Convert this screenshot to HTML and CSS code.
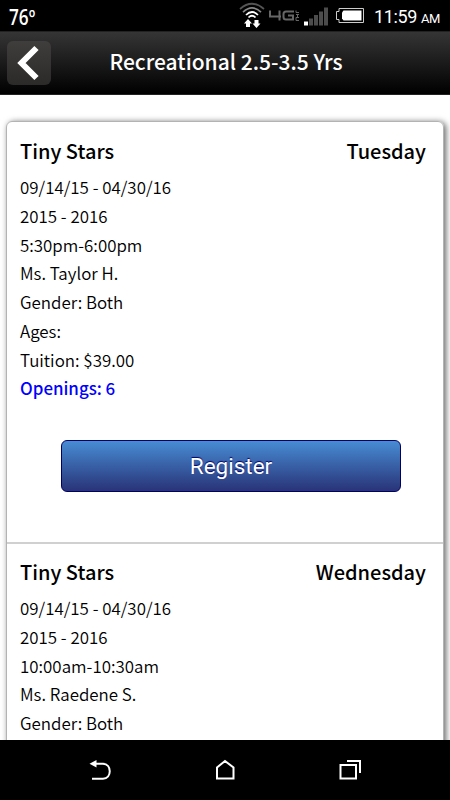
FILE: index.html
```html
<!DOCTYPE html>
<html lang="en">
<head>
  <meta charset="UTF-8">
  <title>Recreational 2.5-3.5 Yrs</title>
  <link rel="stylesheet" href="styles.css">
</head>
<body>
  <div class="status-bar">
    <span class="temp">76º</span>
    <svg class="status-icons" width="127" height="31" viewBox="0 0 127 31">
      <!-- wifi -->
      <g fill="none" stroke-width="1.7">
        <path d="M1 9 Q13 -1.5 25 9" stroke="#555"/>
        <path d="M4 12.2 Q13 3.6 22 12.2" stroke="#888"/>
        <path d="M7 15 Q13 9 19 15" stroke="#fff"/>
        <path d="M9.5 17.5 Q13 14 16.5 17.5" stroke="#fff"/>
      </g>
      <path d="M5 23.500 L9 19 L13 23.500 H11 V27 H7 V23.500 Z M13.500 23.500 H15.500 V20 H19.500 V23.500 H21.500 L17.500 28 Z" fill="#fff"/>
      <!-- 4G LTE -->
      <path d="M31 10.500 V16.500 H42 M40.500 10.500 V20.500 M55 11.500 H47 Q44.500 11.500 44.500 14 V17 Q44.500 19.500 47 19.500 H54 V15.500 H49" fill="none" stroke="#666" stroke-width="2"/>
      <path d="M57 10.500 V12.500 H60 M57 14.500 H60 M58.500 14.500 V17 M60 17.500 H57 V20.500 H60" fill="none" stroke="#666"/>
      <!-- signal -->
      <path d="M65 21.500 h4 v4 h-4 Z" fill="#fff"/>
      <path d="M70 18.500 h4 v7 h-4 Z M75 15 h4 v10.500 h-4 Z M80 11.500 h4 v14 h-4 Z M85 7.500 h4 v18 h-4 Z" fill="#4c4c4c"/>
      <!-- battery -->
      <path d="M100 8.500 H124.500 V22.500 H100 V19.500 H97.500 V11.500 H100 Z" fill="none" stroke="#ccc"/>
      <path d="M104.500 10.500 h18 v10 h-18 l-1.500 -2 v-6 Z" fill="#fff"/>
    </svg>
    <span class="clock">11:59 <small>AM</small></span>
  </div>

  <div class="header">
    <a class="back">
      <svg width="44" height="44" viewBox="0 0 44 44">
        <path d="M29.500 7 L14.500 22 L29.500 37" fill="none" stroke="#fff" stroke-width="6"/>
      </svg>
    </a>
    <h1>Recreational 2.5-3.5 Yrs</h1>
  </div>

  <div class="content">
    <ul class="class-list">
      <li>
        <div class="class-title"><span>Tiny Stars</span><span>Tuesday</span></div>
        <p>09/14/15 - 04/30/16</p>
        <p>2015 - 2016</p>
        <p>5:30pm-6:00pm</p>
        <p>Ms. Taylor H.</p>
        <p>Gender: Both</p>
        <p>Ages:</p>
        <p>Tuition: $39.00</p>
        <p class="openings">Openings: 6</p>
        <a class="register">Register</a>
      </li>
      <li>
        <div class="class-title"><span>Tiny Stars</span><span>Wednesday</span></div>
        <p>09/14/15 - 04/30/16</p>
        <p>2015 - 2016</p>
        <p>10:00am-10:30am</p>
        <p>Ms. Raedene S.</p>
        <p>Gender: Both</p>
      </li>
    </ul>
  </div>

  <div class="nav-bar">
    <svg width="24" height="24" viewBox="0 0 24 24">
      <path d="M7 5.800 H15 C24 6 24 20.500 15 20.700 H4" fill="none" stroke="#fff" stroke-width="2"/>
      <path d="M1.500 5.800 L8.500 2 V9.500 Z" fill="#fff"/>
    </svg>
    <svg width="24" height="24" viewBox="0 0 24 24">
      <path d="M4 20.500 V9.500 L12 3 L20.500 9.500 V20.500 Z" fill="none" stroke="#fff" stroke-width="2"/>
    </svg>
    <svg width="24" height="24" viewBox="0 0 24 24">
      <path d="M2.500 7 H18 V20.500 H2.500 Z M9 3 H22 V15" fill="none" stroke="#fff" stroke-width="2"/>
    </svg>
  </div>
</body>
</html>
```

FILE: styles.css
```css
* {
  box-sizing: border-box;
}
body {
  margin: 0;
  height: 800px;
  display: flex;
  flex-direction: column;
  overflow: hidden;
  background: #fff;
  color: #000;
  font-family: "Noto Sans CJK JP", "Noto Sans", sans-serif;
}
.status-bar {
  display: flex;
  flex: none;
  align-items: center;
  height: 31px;
  padding: 0 10px 0 9px;
  background: #000;
  color: #fff;
  font-family: Roboto, sans-serif;
}
.temp {
  width: 230px;
  padding-top: 2px;
  font-family: "Open Sans", sans-serif;
  font-size: 21.5px;
  font-weight: 600;
  line-height: 28px;
  transform: scaleX(0.8);
  transform-origin: left;
}
.status-icons {
  flex: none;
}
.clock {
  margin-left: auto;
  padding-top: 2px;
  font-size: 18px;
  letter-spacing: -0.4px;
  white-space: nowrap;
}
.clock small {
  font-size: 13px;
}
.header {
  display: flex;
  flex: none;
  align-items: center;
  height: 64px;
  padding: 0 7px;
  background: linear-gradient(#353535, #000);
  border-top: 1px solid #222;
  border-bottom: 1px solid #222;
}
.back {
  width: 44px;
  height: 44px;
  border-radius: 6px;
  background: linear-gradient(#403e3d, #2c2a29);
}
.header h1 {
  flex: 1;
  margin: 0 42px 4px 0;
  color: #fff;
  font-size: 21px;
  font-weight: 500;
  text-align: center;
  white-space: nowrap;
}
.content {
  flex: 1;
  min-height: 0;
  overflow: hidden;
  padding: 26px 6px 0;
}
.class-list {
  list-style: none;
  margin: 0;
  padding: 0;
  border: 1px solid #b3b3b3;
  border-radius: 6px;
  box-shadow: 2px 1px 6px rgba(0, 0, 0, 0.6);
}
.class-list li {
  height: 420px;
  padding: 11px 17px 0 13px;
}
.class-list li + li {
  padding-top: 10px;
  border-top: 2px solid #d0d0d0;
}
.class-title {
  display: flex;
  justify-content: space-between;
  height: 40px;
  font-size: 20px;
  font-weight: 500;
  line-height: 36px;
}
.class-list p {
  margin: 0;
  font-size: 16.9px;
  font-weight: 350;
  line-height: 28.75px;
}
.class-list .openings {
  color: #0000ff;
  font-weight: 500;
}
.register {
  display: block;
  width: 340px;
  height: 52px;
  margin: 37px 0 0 41px;
  border: 1px solid #000066;
  border-radius: 6px;
  background: linear-gradient(#478cd4, #293377);
  color: #fff;
  font-family: Roboto, sans-serif;
  font-size: 22.5px;
  line-height: 51px;
  text-align: center;
  text-shadow: 0 -1px 1px #000066;
}
.nav-bar {
  display: flex;
  flex: none;
  align-items: center;
  justify-content: space-between;
  height: 60px;
  padding: 0 88px;
  background: #000;
}
```
